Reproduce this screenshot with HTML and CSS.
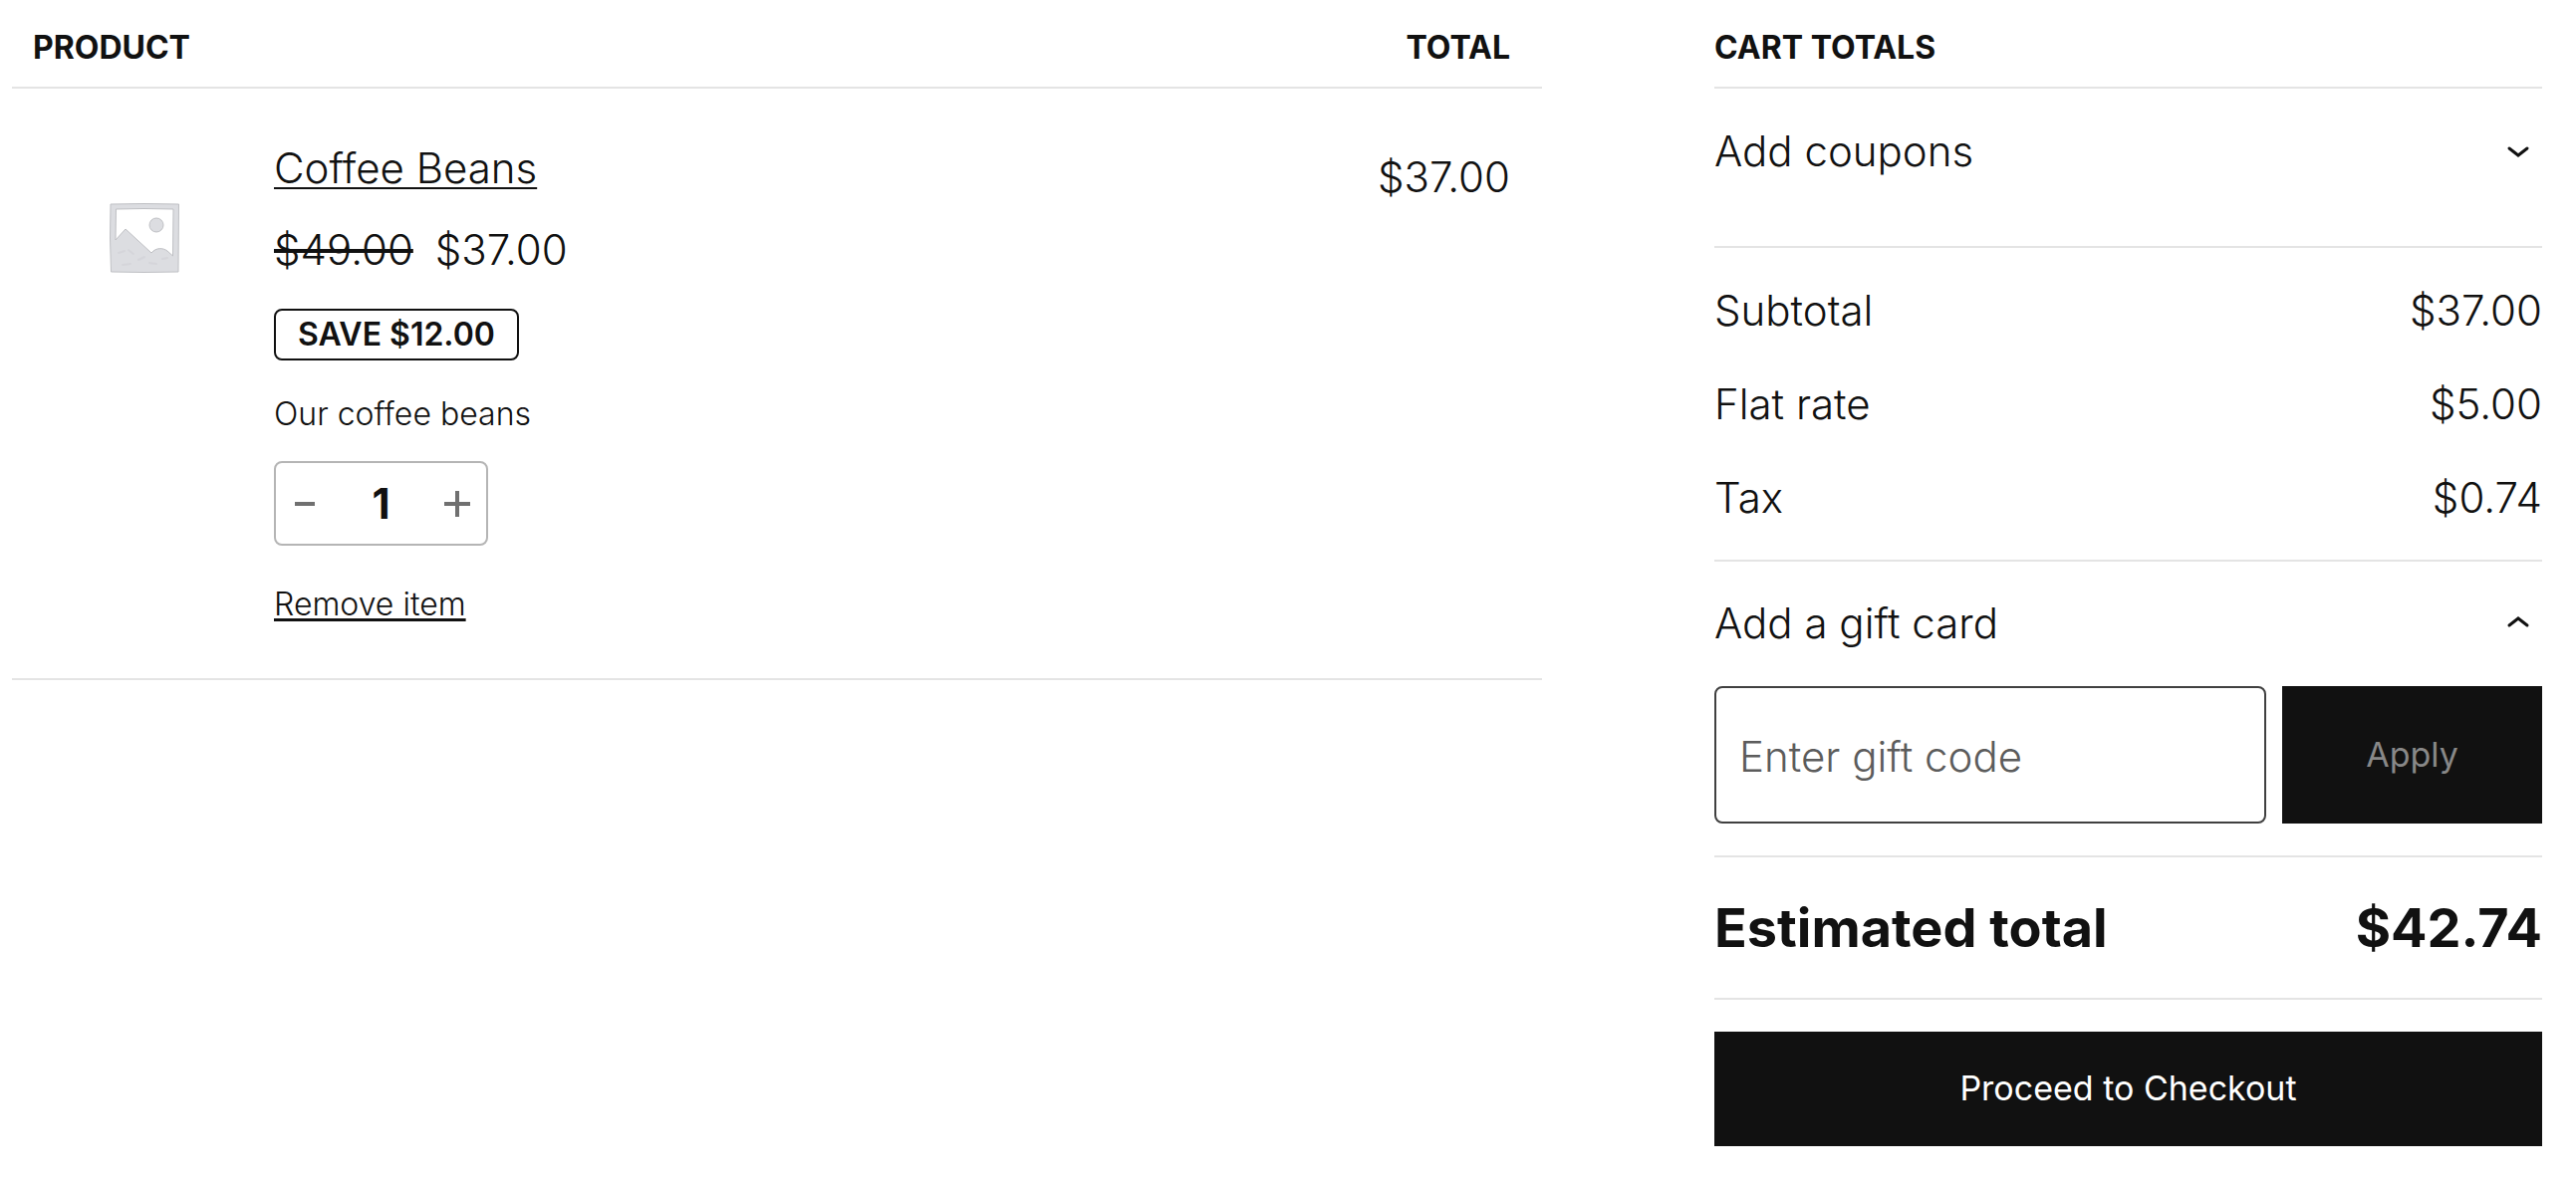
FILE: index.html
```html
<!DOCTYPE html>
<html lang="en">
<head>
  <meta charset="utf-8">
  <meta name="viewport" content="width=device-width, initial-scale=1">
  <title>Cart</title>
  <link rel="stylesheet" href="styles.css">
</head>
<body>
  <main class="cart">
    <table class="items">
      <thead>
        <tr>
          <th class="items-head" scope="col" colspan="2">PRODUCT</th>
          <th class="items-head items-head-total" scope="col">TOTAL</th>
        </tr>
      </thead>
      <tbody>
        <tr>
          <td class="item-image">
            <svg class="placeholder" viewBox="0 0 70 70" role="img" aria-label="Coffee Beans">
              <path fill="#dcdde1" stroke="#bfc0c4" stroke-width="1" fill-rule="evenodd" d="M1 1 35 .5 69.500 1 69 69 35 69.500 1.500 69 .5 35ZM6.500 6 6 37 16 26 42 50C47 44 54 45 58 48L63.500 53 64 6 35 5.500Z"/>
              <circle cx="47" cy="22" r="7" fill="#dcdde1" stroke="#bfc0c4"/>
              <path fill="none" stroke="#d0d1d5" stroke-width="2" stroke-linecap="round" opacity=".6" d="M9 50l6-2M19 47l5 4M29 57l6-3M13 62l8-1M40 60l7 1M53 56l5-1"/>
            </svg>
          </td>
          <td class="item-info">
            <a class="item-name" href="#">Coffee Beans</a>
            <div class="item-price"><del>$49.00</del><ins>$37.00</ins></div>
            <span class="badge">SAVE $12.00</span>
            <p class="item-note">Our coffee beans</p>
            <div class="quantity">
              <button class="step" type="button" aria-label="Reduce quantity">
                <svg class="step-icon" viewBox="0 0 26 28"><path d="M3 14H23"/></svg>
              </button>
              <input class="quantity-value" type="text" inputmode="numeric" value="1" aria-label="Quantity of Coffee Beans">
              <button class="step" type="button" aria-label="Increase quantity">
                <svg class="step-icon" viewBox="0 0 26 28"><path d="M0 14H26M13 1V27"/></svg>
              </button>
            </div>
            <button class="remove" type="button">Remove item</button>
          </td>
          <td class="item-total">$37.00</td>
        </tr>
      </tbody>
    </table>

    <aside class="totals">
      <h2 class="totals-title">CART TOTALS</h2>
      <section class="block block-coupons">
        <button class="toggle" type="button" aria-expanded="false">
          Add coupons
          <svg class="chevron" viewBox="0 0 24 14"><path d="M3 4 12 11 21 4"/></svg>
        </button>
      </section>
      <dl class="block sums">
        <div class="sum"><dt>Subtotal</dt><dd>$37.00</dd></div>
        <div class="sum"><dt>Flat rate</dt><dd>$5.00</dd></div>
        <div class="sum"><dt>Tax</dt><dd>$0.74</dd></div>
      </dl>
      <section class="block block-gift">
        <button class="toggle" type="button" aria-expanded="true">
          Add a gift card
          <svg class="chevron" viewBox="0 0 24 14"><path d="M3 9 12 2 21 9"/></svg>
        </button>
        <form class="gift-form">
          <input class="gift-code" type="text" placeholder="Enter gift code" aria-label="Enter gift code">
          <button class="button apply" type="button" disabled>Apply</button>
        </form>
      </section>
      <dl class="block grand">
        <div class="sum"><dt>Estimated total</dt><dd>$42.74</dd></div>
      </dl>
      <div class="block checkout-block">
        <a class="button checkout" href="#">Proceed to Checkout</a>
      </div>
    </aside>
  </main>
</body>
</html>
```
FILE: styles.css
```css
:root {
  --ink: #111;
  --line: #e4e4e4;
}

* { box-sizing: border-box; }

body {
  margin: 0;
  background: #fff;
  color: var(--ink);
  font: 300 42px/56px Inter, "Liberation Sans", sans-serif;
}

button, input {
  font: inherit;
  color: inherit;
}

button {
  padding: 0;
  border: 0;
  background: none;
  cursor: pointer;
}

dl, dd, p, h2 { margin: 0; }

.cart {
  display: grid;
  grid-template-columns: minmax(0, 1536fr) minmax(0, 831fr);
  gap: 173px;
  align-items: start;
  padding: 0 34px 0 12px;
}

/* Line items */
.items {
  width: 100%;
  border-collapse: separate;
  border-spacing: 0;
}

.items-head,
.totals-title {
  height: 89px;
  padding-top: 24px;
  padding-bottom: 15px;
  border-bottom: 2px solid var(--line);
  font-size: 32px;
  font-weight: 700;
  line-height: 48px;
  text-align: left;
}

.items-head { padding-left: 21px; }

.items-head-total,
.item-total {
  padding-right: 32px;
  text-align: right;
}

.items td {
  border-bottom: 2px solid var(--line);
  vertical-align: top;
}

.items .item-image {
  width: 263px;
  padding: 115px 0 0 98px;
}

.placeholder {
  display: block;
  width: 70px;
  height: 70px;
}

.item-info {
  padding: 52px 0 50px;
}

.item-name {
  display: table;
  color: inherit;
  text-decoration-thickness: 2px;
  text-underline-offset: 4px;
  text-decoration-skip-ink: none;
}

.item-price {
  display: flex;
  gap: 22px;
  margin: 26px 0 31px;
}

.item-price del { text-decoration-thickness: 4px; }
.item-price ins { text-decoration: none; }

.badge {
  display: table;
  padding: 0 22px;
  border: 2px solid var(--ink);
  border-radius: 8px;
  font-size: 32px;
  font-weight: 600;
  line-height: 48px;
}

.item-note {
  margin: 30px 0 23px;
  font-size: 32px;
  line-height: 48px;
}

.quantity {
  display: flex;
  width: 215px;
  height: 85px;
  margin-bottom: 35px;
  border: 2px solid #b5b5b5;
  border-radius: 8px;
}

.step {
  flex: none;
  width: 58px;
}

.step-icon {
  display: block;
  width: 26px;
  height: 28px;
  margin: auto;
  fill: none;
  stroke: #707070;
  stroke-width: 4;
}

.quantity-value {
  flex: 1;
  width: 0;
  padding: 0;
  border: 0;
  background: none;
  font-weight: 700;
  text-align: center;
}

.remove {
  display: block;
  font-size: 32px;
  line-height: 48px;
  text-decoration: underline;
  text-decoration-thickness: 3px;
  text-underline-offset: 3px;
}

.item-total { padding-top: 61px; }

/* Cart totals */
.block + .block { border-top: 2px solid var(--line); }

.block-coupons { padding: 35px 0 67px; }

.toggle {
  display: flex;
  align-items: center;
  justify-content: space-between;
  width: 100%;
  padding-right: 12px;
}

.chevron {
  width: 24px;
  height: 14px;
  fill: none;
  stroke: var(--ink);
  stroke-width: 3;
  stroke-linecap: round;
}

.sums {
  display: grid;
  gap: 38px;
  padding: 35px 0 34px;
}

.sum {
  display: flex;
  justify-content: space-between;
}

.block-gift { padding: 34px 0 32px; }

.gift-form {
  display: flex;
  gap: 16px;
  height: 138px;
  margin-top: 35px;
}

.gift-code {
  flex: 1;
  min-width: 0;
  padding: 4px 23px 0;
  border: 2px solid #404040;
  border-radius: 8px;
  background: #fff;
}

.gift-code::placeholder {
  color: #5c5c5c;
  opacity: 1;
}

.button {
  background: var(--ink);
  color: #fff;
  font-size: 34px;
  font-weight: 400;
  text-align: center;
  text-decoration: none;
}

.apply {
  width: 261px;
  color: #888;
}

.grand {
  padding: 35px 0 34px;
  font-size: 54px;
  font-weight: 700;
  line-height: 72px;
}

.checkout-block { padding: 32px 0 40px; }

.checkout {
  display: block;
  padding: 29px 0 30px;
}
```
